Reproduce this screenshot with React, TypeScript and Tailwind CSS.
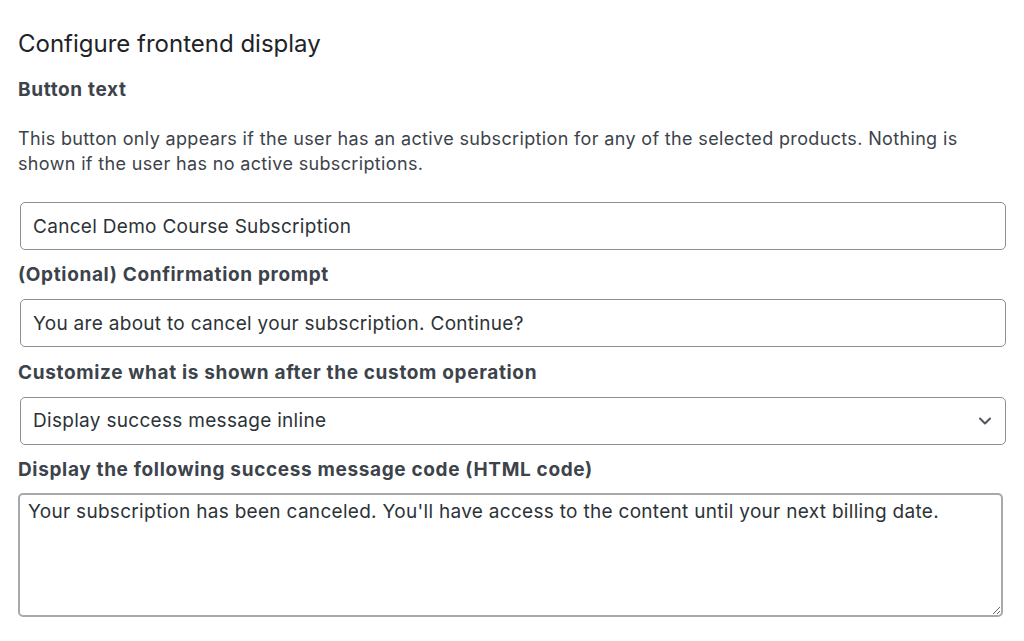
import { ChevronDown } from 'lucide-react';

export default function App() {
  return (
    <div className="min-h-[641px] bg-white pl-[18px] pr-[18px] pt-[28px] font-['Inter',sans-serif] text-[#3c434a]">
      <h2 className="text-[24px] font-normal leading-[32px] text-[#1d2327]">Configure frontend display</h2>

      <label className="mt-[17px] block text-[19px] font-bold leading-[26px] tracking-[0.65px]">Button text</label>
      <p className="mt-[23px] text-[18px] leading-[25px] tracking-[0.35px]">
        This button only appears if the user has an active subscription for any of the selected products. Nothing is
        shown if the user has no active subscriptions.
      </p>

      <div className="mt-[26px] pl-[2px]">
        <input
          className="h-[48px] w-full rounded-[5px] border border-[#8c8f94] px-[12px] text-[19px] tracking-[0.3px] text-[#2c3338] outline-none"
          defaultValue="Cancel Demo Course Subscription"
        />
      </div>

      <label className="mt-[12px] block text-[19px] font-bold leading-[26px] tracking-[0.65px]">
        (Optional) Confirmation prompt
      </label>
      <div className="mt-[11px] pl-[2px]">
        <input
          className="h-[48px] w-full rounded-[5px] border border-[#8c8f94] px-[12px] text-[19px] tracking-[0.3px] text-[#2c3338] outline-none"
          defaultValue="You are about to cancel your subscription. Continue?"
        />
      </div>

      <label className="mt-[13px] block text-[19px] font-bold leading-[26px] tracking-[0.65px]">
        Customize what is shown after the custom operation
      </label>
      <div className="mt-[11px] pl-[2px]">
        <div className="flex h-[48px] w-full items-center justify-between rounded-[5px] border border-[#8c8f94] pl-[12px] pr-[10px] text-[19px] tracking-[0.3px] text-[#2c3338]">
          <span>Display success message inline</span>
          <ChevronDown size={20} strokeWidth={2.5} className="text-[#50575e]" />
        </div>
      </div>

      <label className="mt-[12px] block text-[19px] font-bold leading-[26px] tracking-[0.65px]">
        Display the following success message code (HTML code)
      </label>
      <div className="mt-[10px] pr-[3px]">
        <textarea
          className="block h-[124px] w-full resize-y rounded-[5px] border-2 border-[#a7aaad] px-[8px] py-[4px] text-[19px] leading-[25px] tracking-[0.3px] text-[#2c3338] outline-none"
          defaultValue="Your subscription has been canceled. You'll have access to the content until your next billing date."
        />
      </div>
    </div>
  );
}
